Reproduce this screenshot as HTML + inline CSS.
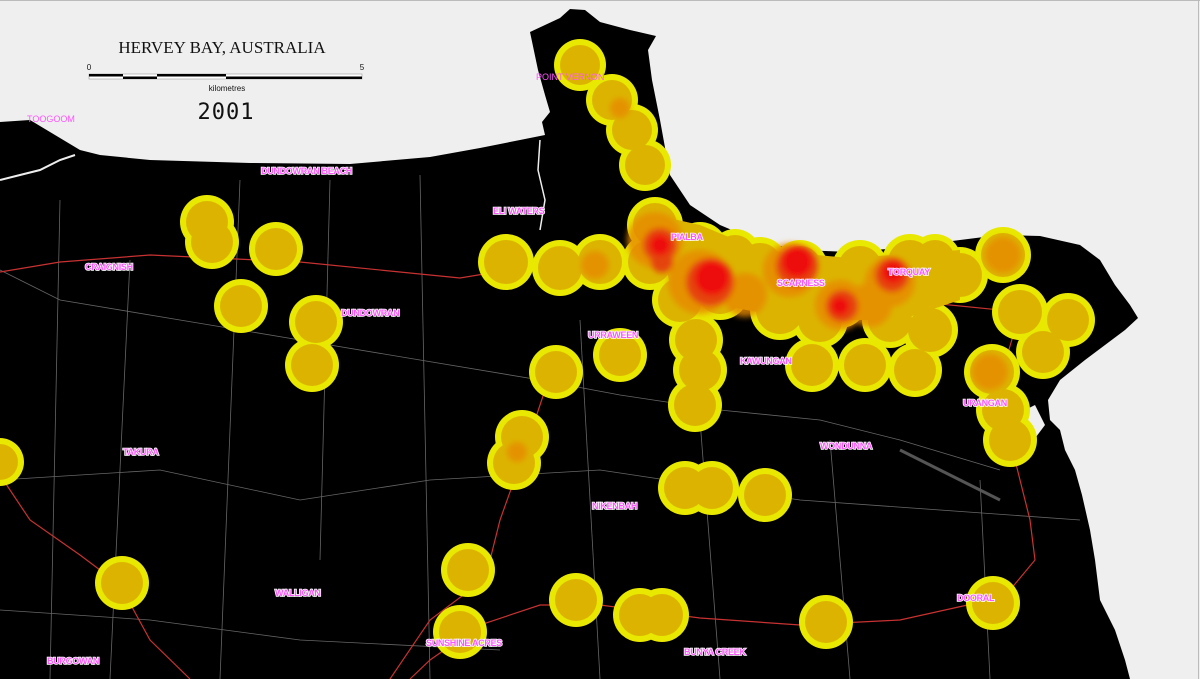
<!DOCTYPE html>
<html><head><meta charset="utf-8"><style>
html,body{margin:0;padding:0;background:#efefef}
svg{display:block}
.l{font-family:"Liberation Sans",sans-serif;font-weight:bold;font-size:9px;fill:#ff55ff;stroke:#fff;stroke-width:1.6px;paint-order:stroke;letter-spacing:-0.3px}
</style></head><body>
<svg width="1200" height="679" viewBox="0 0 1200 679" xmlns="http://www.w3.org/2000/svg">
<defs><filter id="b" x="-50%" y="-50%" width="200%" height="200%"><feGaussianBlur stdDeviation="3"/></filter></defs>
<rect width="1200" height="679" fill="#efefef"/>
<line x1="0" y1="0.5" x2="1200" y2="0.5" stroke="#bbb"/>
<line x1="1198.5" y1="0" x2="1198.5" y2="679" stroke="#bbb"/>
<path d="M0,122 L30,120 L60,138 L80,150 L100,155 L150,160 L250,163 L350,164 L430,157 L480,148 L520,140 L545,135 L542,122 L550,112 L545,95 L538,70 L530,32 L560,18 L570,9 L585,10 L600,22 L630,30 L656,36 L648,50 L652,80 L660,120 L670,175 L690,205 L720,225 L760,242 L800,250 L850,252 L900,248 L960,240 L1000,235 L1040,236 L1080,245 L1100,260 L1115,285 L1130,305 L1138,318 L1125,330 L1105,345 L1085,360 L1060,380 L1048,400 L1050,420 L1060,430 L1065,450 L1075,470 L1082,495 L1090,530 L1095,560 L1100,600 L1115,630 L1125,660 L1130,679 L0,679 Z" fill="#000"/>
<path d="M1015,415 L1035,405 L1045,425 L1030,445 Z" fill="#efefef"/>
<path d="M0,180 L20,175 L40,170 L60,160 L75,155" stroke="#eee" stroke-width="2" fill="none"/>
<path d="M540,140 L538,170 L545,200 L540,230" stroke="#eee" stroke-width="1.5" fill="none"/>
<g stroke="#666" stroke-width="0.8" fill="none">
<path d="M0,270 L60,300 L180,320 L300,340 L420,360 L540,380 L620,395 L720,410 L820,420 L900,440 L1000,470"/>
<path d="M60,200 L50,679"/><path d="M130,260 L110,679"/><path d="M240,180 L220,679"/><path d="M330,180 L320,560"/>
<path d="M420,175 L430,679"/><path d="M580,320 L600,679"/><path d="M700,420 L720,679"/><path d="M830,440 L850,679"/><path d="M980,480 L990,679"/>
<path d="M0,480 L160,470 L300,500 L430,480 L600,470 L800,500 L1080,520"/>
<path d="M0,610 L150,620 L300,640 L500,650"/>
<path d="M900,450 L1000,500" stroke="#555" stroke-width="3"/>
</g>
<g stroke="#c83232" stroke-width="1.2" fill="none">
<path d="M0,272 L60,262 L150,255 L300,262 L460,278 L520,268 L600,262 L700,275 L800,290 L900,300 L1020,312 L1000,380 L1010,440 L1030,520 L1035,560 L1010,590 L990,600 L900,620 L800,625 L700,618 L600,605 L540,605 L480,625 L430,660 L410,679"/>
<path d="M0,475 L30,520 L80,555 L120,585 L150,640 L190,679"/>
<path d="M545,390 L525,450 L500,520 L490,560 L470,590 L430,620 L390,679"/>
</g>
<g fill="#e8e800">
<circle cx="207" cy="222" r="27"/><circle cx="212" cy="242" r="27"/><circle cx="276" cy="249" r="27"/>
<circle cx="241" cy="306" r="27"/><circle cx="316" cy="322" r="27"/><circle cx="312" cy="365" r="27"/>
<circle cx="580" cy="65" r="26"/><circle cx="612" cy="100" r="26"/><circle cx="632" cy="130" r="26"/><circle cx="645" cy="165" r="26"/>
<circle cx="506" cy="262" r="28"/><circle cx="560" cy="268" r="28"/><circle cx="600" cy="262" r="28"/>
<circle cx="556" cy="372" r="27"/><circle cx="522" cy="437" r="27"/><circle cx="514" cy="463" r="27"/>
<circle cx="620" cy="355" r="27"/><circle cx="696" cy="340" r="27"/><circle cx="695" cy="405" r="27"/><circle cx="700" cy="370" r="27"/>
<circle cx="685" cy="488" r="27"/><circle cx="712" cy="488" r="27"/><circle cx="765" cy="495" r="27"/>
<circle cx="468" cy="570" r="27"/><circle cx="460" cy="632" r="27"/><circle cx="576" cy="600" r="27"/><circle cx="640" cy="615" r="27"/><circle cx="662" cy="615" r="27"/>
<circle cx="826" cy="622" r="27"/><circle cx="122" cy="583" r="27"/><circle cx="993" cy="603" r="27"/><circle cx="0" cy="462" r="24"/>
<circle cx="1003" cy="255" r="28"/><circle cx="1020" cy="312" r="28"/><circle cx="1068" cy="320" r="27"/><circle cx="1043" cy="352" r="27"/>
<circle cx="992" cy="372" r="28"/><circle cx="1010" cy="440" r="27"/><circle cx="1003" cy="410" r="27"/>
<circle cx="812" cy="365" r="27"/><circle cx="865" cy="365" r="27"/><circle cx="915" cy="370" r="27"/><circle cx="930" cy="330" r="28"/>
<circle cx="960" cy="275" r="28"/><circle cx="655" cy="225" r="28"/><circle cx="650" cy="262" r="28"/><circle cx="700" cy="250" r="28"/>
<circle cx="720" cy="290" r="30"/><circle cx="760" cy="265" r="28"/><circle cx="780" cy="310" r="30"/><circle cx="800" cy="268" r="28"/>
<circle cx="840" cy="300" r="28"/><circle cx="860" cy="268" r="28"/><circle cx="890" cy="290" r="28"/><circle cx="910" cy="262" r="28"/>
<circle cx="890" cy="320" r="28"/><circle cx="820" cy="320" r="28"/><circle cx="680" cy="300" r="28"/><circle cx="735" cy="255" r="26"/><circle cx="935" cy="260" r="26"/>
</g>
<g fill="#dcb400">
<path d="M655,215 L700,225 L760,250 L850,258 L960,250 L960,300 L900,320 L800,320 L720,305 L670,285 Z"/>
<circle cx="207" cy="222" r="21"/><circle cx="212" cy="242" r="21"/><circle cx="276" cy="249" r="21"/>
<circle cx="241" cy="306" r="21"/><circle cx="316" cy="322" r="21"/><circle cx="312" cy="365" r="21"/>
<circle cx="580" cy="65" r="20"/><circle cx="612" cy="100" r="20"/><circle cx="632" cy="130" r="20"/><circle cx="645" cy="165" r="20"/>
<circle cx="506" cy="262" r="22"/><circle cx="560" cy="268" r="22"/><circle cx="600" cy="262" r="22"/>
<circle cx="556" cy="372" r="21"/><circle cx="522" cy="437" r="21"/><circle cx="514" cy="463" r="21"/>
<circle cx="620" cy="355" r="21"/><circle cx="696" cy="340" r="21"/><circle cx="695" cy="405" r="21"/><circle cx="700" cy="370" r="21"/>
<circle cx="685" cy="488" r="21"/><circle cx="712" cy="488" r="21"/><circle cx="765" cy="495" r="21"/>
<circle cx="468" cy="570" r="21"/><circle cx="460" cy="632" r="21"/><circle cx="576" cy="600" r="21"/><circle cx="640" cy="615" r="21"/><circle cx="662" cy="615" r="21"/>
<circle cx="826" cy="622" r="21"/><circle cx="122" cy="583" r="21"/><circle cx="993" cy="603" r="21"/><circle cx="0" cy="462" r="18"/>
<circle cx="1003" cy="255" r="22"/><circle cx="1020" cy="312" r="22"/><circle cx="1068" cy="320" r="21"/><circle cx="1043" cy="352" r="21"/>
<circle cx="992" cy="372" r="22"/><circle cx="1010" cy="440" r="21"/><circle cx="1003" cy="410" r="21"/>
<circle cx="812" cy="365" r="21"/><circle cx="865" cy="365" r="21"/><circle cx="915" cy="370" r="21"/><circle cx="930" cy="330" r="22"/>
<circle cx="960" cy="275" r="22"/><circle cx="655" cy="225" r="22"/><circle cx="650" cy="262" r="22"/><circle cx="700" cy="250" r="22"/>
<circle cx="720" cy="290" r="24"/><circle cx="760" cy="265" r="22"/><circle cx="780" cy="310" r="24"/><circle cx="800" cy="268" r="22"/>
<circle cx="840" cy="300" r="22"/><circle cx="860" cy="268" r="22"/><circle cx="890" cy="290" r="22"/><circle cx="910" cy="262" r="22"/>
<circle cx="890" cy="320" r="22"/><circle cx="820" cy="320" r="22"/><circle cx="680" cy="300" r="22"/><circle cx="735" cy="255" r="20"/><circle cx="935" cy="260" r="20"/>
</g>
<g filter="url(#b)">
<g fill="#e88a00" opacity="0.8">
<circle cx="655" cy="240" r="28"/><circle cx="700" cy="282" r="32"/><circle cx="790" cy="270" r="27"/><circle cx="840" cy="305" r="25"/>
<circle cx="890" cy="282" r="25"/><circle cx="620" cy="108" r="10"/><circle cx="595" cy="265" r="14"/><circle cx="990" cy="372" r="18"/>
<circle cx="517" cy="452" r="10"/><circle cx="745" cy="295" r="22"/><circle cx="870" cy="305" r="22"/><circle cx="1003" cy="255" r="18"/>
</g>
<g fill="#e63a10" opacity="0.9">
<circle cx="660" cy="245" r="17"/><circle cx="710" cy="282" r="24"/><circle cx="797" cy="266" r="21"/><circle cx="842" cy="306" r="16"/>
<circle cx="892" cy="275" r="17"/><circle cx="662" cy="262" r="11"/>
</g>
<g fill="#ee1010">
<circle cx="712" cy="278" r="17"/><circle cx="797" cy="262" r="15"/><circle cx="660" cy="245" r="10"/><circle cx="893" cy="272" r="11"/><circle cx="840" cy="306" r="9"/>
</g>
</g>
<text x="222" y="53" text-anchor="middle" font-family="Liberation Serif,serif" font-size="17" fill="#111">HERVEY BAY, AUSTRALIA</text>
<text x="89" y="70" text-anchor="middle" font-family="Liberation Sans,sans-serif" font-size="8" fill="#111">0</text>
<text x="362" y="70" text-anchor="middle" font-family="Liberation Sans,sans-serif" font-size="8" fill="#111">5</text>
<rect x="89" y="74" width="273" height="5" fill="#fff" stroke="#888" stroke-width="0.5"/>
<rect x="89" y="74" width="34" height="2.5" fill="#000"/><rect x="123" y="76.5" width="34" height="2.5" fill="#000"/>
<rect x="157" y="74" width="69" height="2.5" fill="#000"/><rect x="226" y="76.5" width="136" height="2.5" fill="#000"/>
<text x="227" y="91" text-anchor="middle" font-family="Liberation Sans,sans-serif" font-size="8" fill="#111">kilometres</text>
<text x="226" y="119" text-anchor="middle" font-family="DejaVu Sans Mono,monospace" font-size="22" fill="#111" letter-spacing="1">2001</text>
<text x="27" y="122" font-family="Liberation Sans,sans-serif" font-size="9" fill="#ff55ff">TOOGOOM</text>
<text x="536" y="80" font-family="Liberation Sans,sans-serif" font-size="9" fill="#ff55ff">POINT VERNON</text>
<text class="l" x="261" y="174">DUNDOWRAN BEACH</text>
<text class="l" x="493" y="214">ELI WATERS</text>
<text class="l" x="85" y="270">CRAIGNISH</text>
<text class="l" x="341" y="316">DUNDOWRAN</text>
<text class="l" x="671" y="240">PIALBA</text>
<text class="l" x="777" y="286">SCARNESS</text>
<text class="l" x="888" y="275">TORQUAY</text>
<text class="l" x="588" y="338">URRAWEEN</text>
<text class="l" x="740" y="364">KAWUNGAN</text>
<text class="l" x="963" y="406">URANGAN</text>
<text class="l" x="123" y="455">TAKURA</text>
<text class="l" x="820" y="449">WONDUNNA</text>
<text class="l" x="592" y="509">NIKENBAH</text>
<text class="l" x="275" y="596">WALLIGAN</text>
<text class="l" x="957" y="601">DOORAL</text>
<text class="l" x="426" y="646">SUNSHINE ACRES</text>
<text class="l" x="684" y="655">BUNYA CREEK</text>
<text class="l" x="47" y="664">BURGOWAN</text>
</svg>
</body></html>
